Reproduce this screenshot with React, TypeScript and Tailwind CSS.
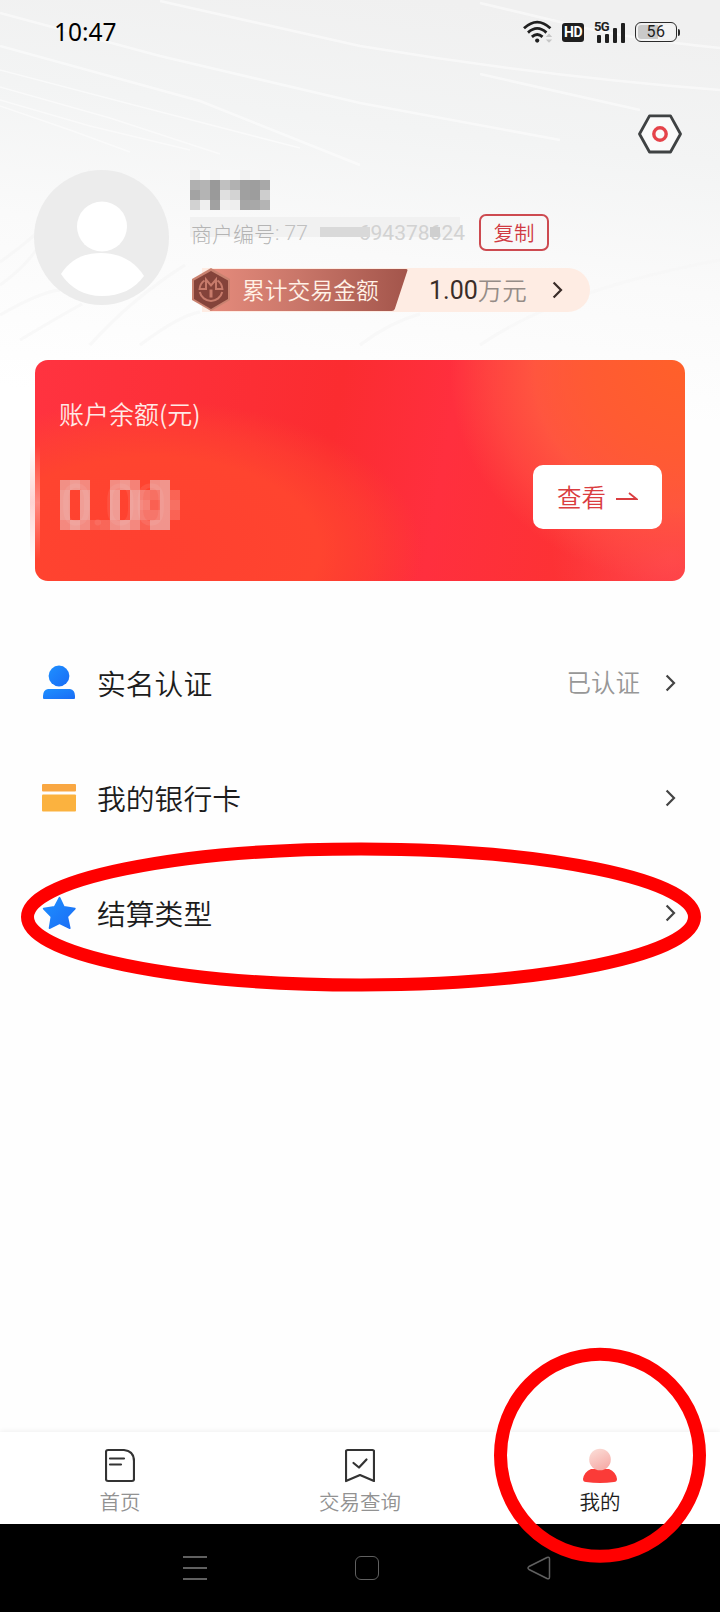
import type { ReactNode } from "react";

const NAME_BLOCKS = [
  ["#f1f1f1", "#fafafa", "#f4f4f4", "#fafafa", "#f9f9f9", "#f2f2f2", "#f7f7f7", "#f3f3f3"],
  ["#b0b0b0", "#b4b4b4", "#999999", "#c0c0c0", "#b1b1b1", "#a0a0a0", "#9e9e9e", "#a8a8a8"],
  ["#a3a3a3", "#b4b4b4", "#9a9a9a", "#e0e0e0", "#d3d3d3", "#a0a0a0", "#9d9d9d", "#cecece"],
  ["#d2d2d2", "#efefef", "#a1a1a1", "#f1f1f1", "#eeeeee", "#a6a6a6", "#a8a8a8", "#b4b4b4"],
];

// opacity of every block that covers the balance, 0 leaves the card visible
const BALANCE_BLOCKS = [
  [0.5, 0.58, 0.46, 0, 0, 0.48, 0.56, 0.42, 0, 0.5, 0.54, 0],
  [0.58, 0, 0.58, 0, 0, 0.58, 0, 0.58, 0.34, 0.3, 0.54, 0.22],
  [0.6, 0, 0.6, 0, 0, 0.6, 0, 0.6, 0.42, 0.2, 0.54, 0.3],
  [0.58, 0, 0.58, 0, 0, 0.58, 0, 0.58, 0.34, 0.34, 0.54, 0.22],
  [0.46, 0.6, 0.48, 0.2, 0.24, 0.5, 0.58, 0.46, 0.2, 0.54, 0.54, 0],
];

function Chevron({ className = "" }: { className?: string }) {
  return (
    <svg
      width="12"
      height="20"
      viewBox="0 0 12 20"
      fill="none"
      stroke="currentColor"
      strokeWidth="2.2"
      className={className}
    >
      <path d="M1.6 2.4 9 10l-7.4 7.6" />
    </svg>
  );
}

function Backdrop() {
  return (
    <svg
      width="720"
      height="420"
      viewBox="0 0 720 420"
      fill="none"
      className="absolute left-0 top-0 -z-10"
    >
      <defs>
        <linearGradient id="sky" x1="0.6" y1="0" x2="0.4" y2="1">
          <stop offset="0" stopColor="#f0f0f0" />
          <stop offset="0.3" stopColor="#f3f4f4" />
          <stop offset="0.6" stopColor="#fafafa" />
          <stop offset="1" stopColor="#ffffff" />
        </linearGradient>
      </defs>
      <rect width="720" height="420" fill="url(#sky)" />
      <g stroke="#ffffff" strokeWidth="2.6" opacity="0.5">
        <path d="M160 1 L360 46 Q540 76 720 90" />
        <path d="M0 13 L160 56 L360 103 L560 140" />
        <path d="M0 46 L200 101 L360 165" />
        <path d="M480 3 L560 22 Q620 38 720 48" />
        <path d="M480 74 L640 110" />
      </g>
      <g stroke="#ffffff" strokeWidth="1.6" opacity="0.55">
        <path d="M0 70 L130 104 L300 148" />
        <path d="M0 87 L110 118 L220 154" />
        <path d="M0 100 L90 126 L190 150" />
        <path d="M0 106 L70 130 L130 152" />
      </g>
      <g stroke="#f5f5f5" strokeWidth="3" opacity="0.55">
        <path d="M0 262 Q60 220 90 170" />
        <path d="M0 285 Q24 268 36 250" />
        <path d="M0 315 Q40 292 60 290" />
        <path d="M20 340 Q60 316 82 304" />
        <path d="M90 345 Q130 300 185 265" />
        <path d="M140 345 Q180 315 200 312" />
        <path d="M360 345 Q390 322 420 314" />
        <path d="M480 345 Q560 290 720 260" />
      </g>
    </svg>
  );
}

function StatusBar() {
  return (
    <header className="flex h-16 items-center justify-between pl-[54px] pr-[40px]">
      <span className="font-['Noto_Sans'] text-[24.5px] leading-none text-black">10:47</span>
      <div className="flex items-center text-[#1f1f1f]">
        {/* Wifi */}
        <svg width="30" height="24" viewBox="0 0 30 24" fill="none" stroke="currentColor">
          <path d="M1 8.2Q14.2-4 27.4 8.2" strokeWidth="2.8" />
          <path d="M5 12.6Q14.2 4.2 23.4 12.6" strokeWidth="2.8" />
          <path d="M8.9 16.9Q14.2 12 19.5 16.9" strokeWidth="2.8" />
          <circle cx="14.2" cy="20.6" r="2.1" fill="currentColor" stroke="none" />
          <path d="m22.800 17 3.200-3.600 3.200 3.600zm0 2.400 3.200 3.400 3.200-3.400z" fill="#c6c6c6" stroke="none" />
        </svg>
        <span className="ml-[9px] flex h-[19px] w-[22px] items-center justify-center rounded-[3px] bg-[#1f1f1f] font-[Roboto] text-[14px] font-bold leading-none tracking-[-0.5px] text-white">
          HD
        </span>
        {/* Signal */}
        <div className="relative ml-[10px] flex h-[22px] w-[33px] items-end gap-[4px] pl-[3px]">
          <span className="absolute -top-[1px] left-0 font-[Roboto] text-[13px] font-bold leading-none tracking-[-0.6px]">
            5G
          </span>
          <i className="h-[8px] w-[4px] rounded-[1px] bg-[#1f1f1f]" />
          <i className="h-[9px] w-[4px] rounded-[1px] bg-[#1f1f1f]" />
          <i className="h-[15px] w-[4px] rounded-[1px] bg-[#1f1f1f]" />
          <i className="h-[20px] w-[4px] rounded-[1px] bg-[#1f1f1f]" />
        </div>
        {/* Battery */}
        <div className="ml-[8px] flex h-[20px] w-[42px] items-center justify-center rounded-[6px] border-[1.5px] border-[#2b2b2b] bg-linear-to-r from-[#c9c9c9] from-55% to-[#f3f3f3] to-55% bg-clip-content p-[2px] font-[Roboto] text-[16px] leading-none tracking-[0.5px]">
          56
        </div>
        <i className="ml-px h-[7px] w-[2px] rounded-r bg-[#2b2b2b]" />
      </div>
    </header>
  );
}

function Profile() {
  return (
    <section className="flex h-[206px] pl-[34px]">
      <svg width="136" height="136" viewBox="0 0 136 136" className="mt-[16px]">
        <circle cx="67.5" cy="67.5" r="67.5" fill="#ececec" />
        <circle cx="68" cy="56.5" r="25" fill="#ffffff" />
        <path d="M27 104C36 90 49 83 67 83s34 8 43 23c-9 13-24 20-42 20s-32-8-41-22z" fill="#ffffff" />
      </svg>
      <div className="ml-[20px] mt-[16px] flex flex-col">
        <div className="grid w-[80px] grid-cols-8">
          {NAME_BLOCKS.flat().map((color, i) => (
            <i key={i} className="h-[10px]" style={{ backgroundColor: color }} />
          ))}
        </div>
        <div className="mt-[4px] flex h-[37px] items-center">
          <div className="relative flex w-[289px] items-center whitespace-nowrap pl-px pt-[2px] text-[21px] font-light leading-none text-[#b4b4b4]">
            <i className="absolute left-0 top-[-4px] -z-10 h-[20px] w-[270px] bg-[#f1f1f1]" />
            <i className="absolute left-[130px] top-[6px] h-[10px] w-[50px] bg-[#d9d9d9]" />
            <i className="absolute left-[240px] top-[6px] h-[10px] w-[10px] bg-[#cfcfcf]" />
            <span>商户编号</span>
            <span className="font-[Roboto] font-light text-[#c0c0c0]">:&nbsp;77</span>
            <span className="ml-auto mr-[14px] font-[Roboto] font-normal text-[#d2d2d2]">
              694378624
            </span>
          </div>
          <button className="h-[37px] w-[70px] rounded-[7px] border-2 border-[#cd4a50] text-[20.5px] font-[350] leading-none text-[#d03b43]">
            复制
          </button>
        </div>
        <div className="mt-[17px] flex h-[44px] w-[400px] items-center rounded-r-full bg-[#feece3] bg-clip-content pl-[12px]">
          <div className="-ml-[12px] flex h-[43px] w-[218px] items-center">
            <svg width="218" height="44" viewBox="0 0 218 44" className="absolute">
              <defs>
                <linearGradient id="ribbon">
                  <stop offset="0" stopColor="#e58b7c" />
                  <stop offset="0.45" stopColor="#c97669" />
                  <stop offset="1" stopColor="#a3554b" />
                </linearGradient>
              </defs>
              <path d="M20 1h196q2 0 1.300 2l-12.500 38q-.8 2-3 2H20z" fill="url(#ribbon)" />
              <path d="m21 0 19 11v21L21 43 2 32V11z" fill="#c98270" />
              <path d="m21 3 17 9.600v18.400L21 41 4 31V12.600z" fill="#84433a" />
              <g fill="none" stroke="#c77b6b" strokeWidth="2">
                <path d="M14.500 12.500A11.500 11.500 0 0 0 9.600 21H16v-9.500l5 6 5-6V21h6.400a11.500 11.500 0 0 0-4.900-8.500" />
                <path d="M9.800 24a11.500 11.500 0 0 0 22.400 0" />
                <path d="M21 21.500v8" strokeWidth="3" />
              </g>
            </svg>
            <span className="relative pl-[52px] text-[22.800px] font-[350] leading-none text-[#fff1e6]">
              累计交易金额
            </span>
          </div>
          <span className="ml-[21px] font-[Roboto] text-[25px] leading-none text-[#3a2c28]">1.00</span>
          <span className="text-[24.500px] font-[350] leading-none text-[#958c87]">万元</span>
          <Chevron className="ml-[25px] text-[#3a2c28]" />
        </div>
      </div>
    </section>
  );
}

function BalanceCard() {
  return (
    <section className="relative mx-[35px] flex h-[221px] justify-between rounded-[13px] bg-[#fe3136] bg-[radial-gradient(circle_at_100%_0%,#ff6029_0%,#ff5b32_13%,transparent_23%),radial-gradient(ellipse_235px_210px_at_100%_6%,#ff5836_0%,#ff5540_64%,rgba(255,77,66,0.7)_82%,transparent_100%),radial-gradient(circle_at_98%_88%,#ff4750_0%,transparent_18%),radial-gradient(ellipse_270px_150px_at_18%_86%,#ff4030_0%,#ff442f_62%,rgba(255,70,48,0.5)_82%,transparent_100%),linear-gradient(100deg,#ff3340,#fb2c30_45%,#ff2f3e_62%,#fb342b)] pl-[24px] pr-[23px] text-white">
      <i className="absolute -left-[5px] top-[85px] h-[115px] w-[10px] bg-linear-to-b from-transparent via-[#ffb5b5]/60 to-transparent" />
      <div className="pt-[40px]">
        <h2 className="text-[25px] font-[350] leading-[26px] text-[#ffe9e6]">账户余额(元)</h2>
        <div className="relative ml-px mt-[54px] h-[50px] w-[120px]">
          <span className="font-[Roboto] text-[58px] leading-[50px] tracking-[-2px] text-white/8">
            0.00
          </span>
          <div className="absolute inset-0 grid grid-cols-12">
            {BALANCE_BLOCKS.flat().map((opacity, i) => (
              <i key={i} className="h-[10px] bg-[#e6dcdc]" style={{ opacity }} />
            ))}
          </div>
        </div>
      </div>
      <button className="mt-[105px] flex h-[64px] w-[129px] items-center rounded-[10px] bg-white pl-[24px] text-[24.5px] font-[350] leading-none text-[#da3d40]">
        查看
        <svg
          width="22"
          height="12"
          viewBox="0 0 22 12"
          fill="none"
          stroke="currentColor"
          strokeWidth="1.800"
          className="ml-[10px]"
        >
          <path d="M0 8h20.500L13 2" />
        </svg>
      </button>
    </section>
  );
}

function MenuRow({ icon, label, note }: { icon: ReactNode; label: string; note?: string }) {
  return (
    <li className="flex h-[115px] items-center pl-[42px] pr-[43px]">
      {icon}
      <span className="ml-[20px] pt-px text-[28.800px] font-[350] leading-none text-[#1c1c1c]">
        {label}
      </span>
      <span className="ml-auto mr-[25px] text-[24.500px] font-[350] leading-none text-[#979797]">
        {note}
      </span>
      <Chevron className="text-[#444444]" />
    </li>
  );
}

function Menu() {
  return (
    <ul className="mt-[44px]">
      <MenuRow
        label="实名认证"
        note="已认证"
        icon={
          <svg width="35" height="36" viewBox="0 0 35 36">
            <defs>
              <linearGradient id="blue" x1="0" y1="0" x2="1" y2="1">
                <stop offset="0" stopColor="#1e90ff" />
                <stop offset="1" stopColor="#1a6cf5" />
              </linearGradient>
            </defs>
            <circle cx="17" cy="11" r="10.400" fill="url(#blue)" />
            <path d="M6 24h22q5 1 5 7v2q0 1-1 1H2q-1 0-1-1v-2q0-6 5-7z" fill="url(#blue)" />
          </svg>
        }
      />
      <MenuRow
        label="我的银行卡"
        icon={
          <svg width="35" height="28" viewBox="0 0 35 28">
            <rect width="34" height="7.500" rx="1" fill="#f9a742" />
            <rect y="10.500" width="34" height="17" rx="1" fill="#fbb23f" />
          </svg>
        }
      />
      <MenuRow
        label="结算类型"
        icon={
          <svg width="35" height="34" viewBox="0 0 35 34">
            <path
              d="m17.500 1.600 4.400 9.300 11 1.700-7.600 8 2.500 11.600-10.300-5-10 5 1.900-11.600-7.800-8 11-1.700z"
              fill="url(#blue)"
              stroke="url(#blue)"
              strokeWidth="1.600"
              strokeLinejoin="round"
            />
          </svg>
        }
      />
    </ul>
  );
}

function Tab({ icon, label, active }: { icon: ReactNode; label: string; active?: boolean }) {
  return (
    <button
      className={`flex w-[240px] flex-col items-center pt-[16px] text-[20.500px] font-[350] leading-[22px] ${
        active ? "text-[#1c1c1c]" : "text-[#929292]"
      }`}
    >
      {icon}
      <span className="mt-[6px]">{label}</span>
    </button>
  );
}

function TabBar() {
  return (
    <nav className="flex h-[92px] bg-white shadow-[0_-1px_5px_rgba(0,0,0,0.06)]">
      <Tab
        label="首页"
        icon={
          <svg width="30" height="36" viewBox="0 0 30 36" fill="none" stroke="#333333" strokeWidth="2.200">
            <path d="M3 2h16q10 1 10 11v18q0 2-2 2H3q-2 0-2-2V4q0-2 2-2z" />
            <path d="M5 10.500h14M5 16.500h11" strokeLinecap="round" />
          </svg>
        }
      />
      <Tab
        label="交易查询"
        icon={
          <svg
            width="30"
            height="36"
            viewBox="0 0 30 36"
            fill="none"
            stroke="#333333"
            strokeWidth="2.200"
            strokeLinejoin="round"
          >
            <path d="M2.500 2h25q1.500 0 1.500 1.500V33l-14-6L1 33V3.500Q1 2 2.500 2z" />
            <path d="m8.500 15 5.500 4.500 7.500-8" strokeLinecap="round" />
          </svg>
        }
      />
      <Tab
        active
        label="我的"
        icon={
          <svg width="36" height="36" viewBox="0 0 36 36">
            <defs>
              <linearGradient id="head" x1="0.2" y1="0" x2="0.7" y2="1">
                <stop offset="0" stopColor="#fbdcd6" />
                <stop offset="1" stopColor="#f6aaa6" />
              </linearGradient>
            </defs>
            <path d="M9 21h18q7 3 8 10 0 3-3 3-14 2-28 0-3 0-3-3 1-7 8-10z" fill="#fb3b38" />
            <circle cx="18" cy="11.500" r="10.800" fill="url(#head)" />
          </svg>
        }
      />
    </nav>
  );
}

function SystemNav() {
  return (
    <footer className="flex h-[88px] items-center bg-black pl-[183px] text-[#606060]">
      <svg width="24" height="26" viewBox="0 0 24 26" stroke="currentColor" strokeWidth="1.800">
        <path d="M0 2h24M0 13h24M0 24h24" />
      </svg>
      <i className="ml-[148px] size-[24px] rounded-[6px] border-[1.5px] border-[#606060]" />
      <svg
        width="24"
        height="24"
        viewBox="0 0 24 24"
        fill="none"
        stroke="currentColor"
        strokeWidth="1.500"
        strokeLinejoin="round"
        className="ml-[148px]"
      >
        <path d="M2 10.500 20 1.500q2.500-1 2.500 1.500v18q0 2.500-2.500 1.500L2 13.500q-2-1.500 0-3z" />
      </svg>
    </footer>
  );
}

// red marker rings drawn over the screen
function Markers() {
  return (
    <svg
      width="720"
      height="1612"
      viewBox="0 0 720 1612"
      fill="none"
      stroke="#ff0000"
      strokeWidth="13"
      className="pointer-events-none absolute left-0 top-0"
    >
      <ellipse cx="361" cy="917" rx="333.500" ry="68" />
      <ellipse cx="600" cy="1455.300" rx="99.500" ry="101" />
    </svg>
  );
}

export default function App() {
  return (
    <div className="relative isolate flex h-[1612px] w-[720px] flex-col overflow-hidden bg-[#fefefe] font-['Noto_Sans_CJK_SC',sans-serif]">
      <Backdrop />
      <StatusBar />
      <div className="flex h-[90px] justify-end pr-[38px] pt-[50px]">
        <svg width="44" height="40" viewBox="0 0 44 40" fill="none">
          <path
            d="M11.500 1.800h21L42.500 20l-10 18h-21L1.500 20z"
            fill="#fafafa"
            stroke="#3f4243"
            strokeWidth="2.800"
            strokeLinejoin="round"
          />
          <circle cx="22" cy="20" r="6.200" stroke="#e5434a" strokeWidth="3.400" />
        </svg>
      </div>
      <Profile />
      <BalanceCard />
      <Menu />
      <div className="flex-1" />
      <TabBar />
      <SystemNav />
      <Markers />
    </div>
  );
}
